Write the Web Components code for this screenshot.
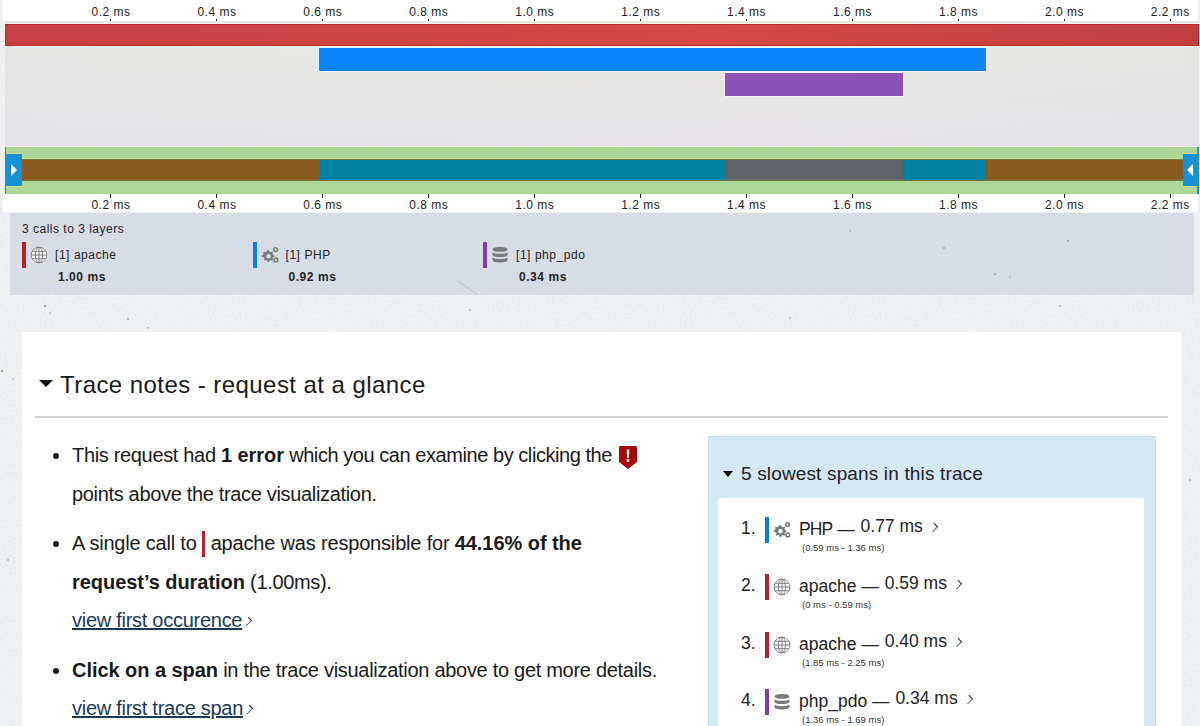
<!DOCTYPE html>
<html><head><meta charset="utf-8">
<style>
html,body{margin:0;padding:0;height:726px;overflow:hidden}
body{font-family:"Liberation Sans",Arial,sans-serif;color:#1a1a1a;
background-color:#f0f2f3;
background-image:url("data:image/svg+xml,%3Csvg xmlns='http://www.w3.org/2000/svg' width='1200' height='726'%3E%3Cfilter id='n'%3E%3CfeTurbulence type='fractalNoise' baseFrequency='.4' numOctaves='3' seed='7'/%3E%3CfeColorMatrix values='0 0 0 0 .6 0 0 0 0 .62 0 0 0 0 .63 0 0 0 .42 -.15'/%3E%3C/filter%3E%3Crect width='1200' height='726' filter='url(%23n)'/%3E%3Cg fill='%23a9adad'%3E%3Ccircle cx='45' cy='306' r='1.2'/%3E%3Ccircle cx='50' cy='313' r='.8'/%3E%3Ccircle cx='128' cy='319' r='1'/%3E%3Ccircle cx='148' cy='328' r='.9'/%3E%3Ccircle cx='2' cy='371' r='1.200'/%3E%3Ccircle cx='13' cy='379' r='.7'/%3E%3Ccircle cx='470' cy='310' r='.9'/%3E%3Ccircle cx='790' cy='318' r='.8'/%3E%3Ccircle cx='1060' cy='306' r='1'/%3E%3Ccircle cx='1190' cy='480' r='1'/%3E%3Ccircle cx='8' cy='560' r='.9'/%3E%3C/g%3E%3C/svg%3E");}
trace-app{display:block}
</style></head><body>
<trace-app></trace-app>
<script>
const def=(name,html)=>{customElements.define(name,class extends HTMLElement{
  constructor(){super();this.attachShadow({mode:'open'}).innerHTML=html;}
})};

/* icon */
customElements.define('layer-icon',class extends HTMLElement{
  connectedCallback(){
    const t=this.getAttribute('type'),s=this.getAttribute('size')||18;
    const icons={
globe:`<circle cx="9" cy="9" r="8.8" fill="#fff" opacity=".8"/><g fill="none" stroke="#808080" stroke-width="1"><circle cx="9" cy="9" r="7.9"/><ellipse cx="9" cy="9" rx="3.6" ry="7.900"/><path d="M9 1.100v15.800M1.100 9h15.800M2.300 5.300h13.400M2.300 12.700h13.400"/></g>`,
gears:`<g fill="#7a7a7a"><path fill-rule="evenodd" d="M7 4.200l1.300.2.4 1.300 1.200.5 1.200-.6 1 1-.6 1.200.5 1.200 1.300.4v1.500l-1.300.4-.5 1.200.6 1.200-1 1-1.200-.6-1.200.5-.4 1.300H6.700l-.4-1.300-1.200-.5-1.200.6-1-1 .6-1.200-.5-1.200L.7 11V9.500l1.300-.4.5-1.200-.6-1.200 1-1 1.200.6 1.200-.5.4-1.300zM7.500 8a2.300 2.300 0 100 4.600 2.300 2.300 0 000-4.600z"/></g><g fill="none" stroke="#7a7a7a" stroke-width="1.500"><circle cx="14.600" cy="3.600" r="1.900"/><circle cx="14.800" cy="14" r="1.900"/></g>`,
db:`<g fill="#7a7a7a"><path d="M1.500 3.400C1.500 1.900 4.800 1 9 1s7.500.9 7.500 2.400S13.200 5.800 9 5.800 1.500 4.900 1.500 3.400z"/><path d="M1.500 6.200c1.400 1.100 4.200 1.600 7.500 1.600s6.100-.5 7.500-1.600v2.500c0 1.400-3.300 2.400-7.500 2.400s-7.500-1-7.500-2.400z"/><path d="M1.500 11.400c1.400 1.100 4.200 1.600 7.500 1.600s6.100-.5 7.500-1.600v2.700c0 1.500-3.300 2.500-7.500 2.500s-7.500-1-7.500-2.500z"/></g>`};
    this.attachShadow({mode:'open'}).innerHTML=`<style>:host{display:inline-flex;width:${s}px;height:${s}px;flex:none}svg{width:100%;height:100%;display:block}</style><svg viewBox="0 0 18 18">${icons[t]}</svg>`;
  }
});

/* axis */
const labels=['0.2','0.4','0.6','0.8','1.0','1.2','1.4','1.6','1.8','2.0','2.2'];
def('time-axis',`<style>
:host{display:flex;box-sizing:border-box;background:#fff;height:var(--h,21px);margin:0 2px 0 3px;padding-left:55px;font-size:12px;color:#222;overflow:hidden}
.t{flex:none;width:105.940px;display:flex;flex-direction:column;align-items:center}
.l{line-height:14px;white-space:nowrap;letter-spacing:.5px;margin-top:var(--top,5px)}
.k{width:1px;height:var(--k,2px);background:#222;order:var(--ko,1)}
</style>`+labels.map(l=>`<div class="t"><span class="k"></span><span class="l">${l} ms</span></div>`).join(''));

/* chart */
def('span-bar',`<style>:host{display:block;box-sizing:border-box;height:var(--hh,23px);margin-bottom:2px;margin-left:var(--x);width:var(--w);background:var(--g,var(--c));border:1px solid var(--b,var(--c));box-shadow:0 0 0 1px rgba(255,255,255,.4)}</style>`);

def('trace-chart',`<style>
:host{display:block;box-sizing:border-box;height:125px;margin:0 1px 0 5px;padding-top:3px;background:linear-gradient(180deg,rgba(230,232,226,.6) 0,rgba(228,226,232,.8) 100%),linear-gradient(90deg,#e4e5e3 0,#ede9e4 65%,#e2e2e1 100%)}
</style><slot></slot>`);

def('trace-minimap',`<style>
:host{display:flex;box-sizing:border-box;height:47px;margin:1px 1px 0 5px;background:#aed696;padding-top:12px;position:relative;border-left:1px solid #1b8fd0;border-right:2px solid #1b8fd0}
.row{display:flex;height:22px;width:100%;border-top:1px solid #6f7a3e;border-bottom:1px solid #6f7a3e;box-sizing:border-box;margin-left:15px;margin-right:12px;box-shadow:0 -1px 0 #d4dc94}
.s{height:100%;flex:none}
.h{position:absolute;top:7px;width:16px;height:32px;background:#1890d4;display:flex;align-items:center;justify-content:center;box-shadow:0 1px 0 #d4dc94,0 -1px 0 #d4dc94}
.h.l{left:0}.h.r{right:0;width:14px}
.h i{width:0;height:0;border-style:solid;border-width:6px 0 6px 6px;border-color:transparent transparent transparent #fff}
.h.r i{border-width:6px 6px 6px 0;border-color:transparent #fff transparent transparent}
</style>
<div class="h l"><i></i></div>
<div class="row">
<div class="s" style="width:298px;background:#8a5b20"></div>
<div class="s" style="width:406px;background:#0083a3"></div>
<div class="s" style="width:178px;background:#606368"></div>
<div class="s" style="width:83px;background:#0083a3"></div>
<div class="s" style="flex:1;background:#8a5b20"></div>
</div>
<div class="h r"><i></i></div>`);

/* legend */
def('layer-legend',`<style>
:host{display:block;box-sizing:border-box;height:82px;margin:1px 6px 0 10px;background-color:#d8dde6;padding:9px 12px 0;font-size:12px;color:#222;
background-image:url("data:image/svg+xml,%3Csvg xmlns='http://www.w3.org/2000/svg' width='1184' height='82'%3E%3Cfilter id='n'%3E%3CfeTurbulence type='fractalNoise' baseFrequency='.5' numOctaves='3' seed='3'/%3E%3CfeColorMatrix values='0 0 0 0 .6 0 0 0 0 .63 0 0 0 0 .68 0 0 0 .5 -.18'/%3E%3C/filter%3E%3Crect width='1184' height='82' filter='url(%23n)'/%3E%3Cg fill='%23a0a4ac'%3E%3Ccircle cx='1058' cy='28' r='1'/%3E%3Ccircle cx='934' cy='35' r='1'/%3E%3Ccircle cx='985' cy='61' r='1'/%3E%3Ccircle cx='1000' cy='64' r='.8'/%3E%3Ccircle cx='840' cy='18' r='.8'/%3E%3C/g%3E%3Cpath d='M448 68l20 14' stroke='%23b4b8c0' stroke-width='.8'/%3E%3C/svg%3E")}
.h{line-height:14px;letter-spacing:.5px}
.r{display:flex;margin-top:6px}
</style><div class="h">3 calls to 3 layers</div><div class="r"><slot></slot></div>`);

customElements.define('legend-item',class extends HTMLElement{connectedCallback(){
 const g=n=>this.getAttribute(n);
 this.attachShadow({mode:'open'}).innerHTML=`<style>
:host{display:grid;grid-template-columns:4px auto 1fr;width:230.500px;font-size:12px;letter-spacing:.55px}
.b{width:4px;height:26px;background:${g('color')}}
layer-icon{margin:4px 0 0 4px}
.n{margin:0 0 0 7px;line-height:26px}
.t{grid-column:1/-1;font-weight:700;padding-left:36px;line-height:14px;margin-top:2px}
</style><span class="b"></span><layer-icon type="${g('icon')}" size="18"></layer-icon><span class="n">[1] ${g('name')}</span><span class="t">${g('time')}</span>`;
}});

/* slow spans */
customElements.define('span-row',class extends HTMLElement{connectedCallback(){
 const g=n=>this.getAttribute(n);
 this.attachShadow({mode:'open'}).innerHTML=`<style>
:host{display:grid;grid-template-columns:24px 4px 22px auto;height:57.300px;align-content:start;font-size:18px;color:#222}
.num{line-height:20px;font-size:17.500px;margin-top:1px}
.b{width:4px;height:26px;background:${g('color')}}
layer-icon{margin:4px 0 0 4px}
.m{padding-left:8px;white-space:nowrap;line-height:22px;font-size:17.500px;margin-top:-2px}
.m b{font-weight:400;position:relative;top:3px;margin-right:1px}
.m b span{letter-spacing:${g('ls')||0}px}
.c{display:inline-block;margin-left:2px;position:relative;top:-1px;width:6px;height:6px;border:solid #333;border-width:1.500px 1.500px 0 0;transform:rotate(45deg) scale(.8,1.100)}
.r{grid-column:4;grid-row:2;font-size:9.500px;line-height:10px;padding-left:11px;color:#333}
</style><span class="num">${g('n')}.</span><span class="b"></span><layer-icon type="${g('icon')}" size="18"></layer-icon><span class="m"><b><span>${g('name')}</span> —</b> ${g('time')} ms <i class="c"></i></span><span class="r">(${g('range')})</span>`;
}});

def('slow-spans',`<style>
:host{display:flex;flex-direction:column;box-sizing:border-box;width:448px;height:320px;background:#d4e9f4;border:1px solid #c4e0ef;border-bottom:0;padding:0 11px 0 9px;flex:none}
.h{display:flex;align-items:center;flex:none;height:61px;padding:13px 0 0 5px;box-sizing:border-box;font-size:19px;color:#222;letter-spacing:.15px;white-space:nowrap}
.a{width:0;height:0;border-style:solid;border-width:6px 5.500px 0;border-color:#111 transparent transparent;margin-right:8px}
.b{background:#fff;flex:1;padding:19px 0 0 23px}
</style><div class="h"><span class="a"></span>5 slowest spans in this trace</div><div class="b"><slot></slot></div>`);

def('note-link',`<style>:host{display:block;letter-spacing:-.27px}a{color:#1a3a5a;text-decoration:underline}.c{display:inline-block;margin-left:2px;position:relative;top:-2px;width:6px;height:6px;border:solid #333;border-width:1.500px 1.500px 0 0;transform:rotate(45deg) scale(.7,1.200)}</style><a><slot></slot></a><i class="c"></i>`);

def('trace-notes',`<style>
:host{display:block;box-sizing:border-box;margin:37px 19px 0 22px;height:400px;background:#fff;padding:0 13px}
.h{display:flex;align-items:center;height:86px;box-sizing:border-box;border-bottom:2px solid #cfcfcf;font-size:24px;color:#1a1a1a;padding:22px 0 0 4px;letter-spacing:.44px;white-space:nowrap}
.a{width:0;height:0;border-style:solid;border-width:7px 7px 0;border-color:#111 transparent transparent;margin:-4px 7px 0 0}
.body{display:flex;padding-top:18px;justify-content:space-between;padding-right:12px}
.l{flex:1}
</style><div class="h"><span class="a"></span>Trace notes - request at a glance</div>
<div class="body"><div class="l"><slot name="notes"></slot></div><slot name="side"></slot></div>`);

def('note-list',`<style>
:host{display:block;font-size:20px;line-height:38.500px;color:#1a1a1a;letter-spacing:-.33px}
ul{margin:0;padding:0 0 0 37px}
</style><ul><slot></slot></ul>`);

def('trace-app',`<style>:host{display:block}
.ind{display:inline-block;width:3px;height:26px;background:#b5232a;vertical-align:-7px;margin:0 6px 0 5px}
.err{display:inline-block;vertical-align:-7px;margin-left:7px}
b{font-weight:700;letter-spacing:-.05px}
li{margin-bottom:11px;white-space:nowrap}
</style>
<time-axis></time-axis>
<trace-chart>
<span-bar style="--hh:22px;--x:0;--w:1194px;--c:#cc4444;--b:#bf2a2a;--g:linear-gradient(90deg,#c64044 0,#d54a44 60%,#c03e42 100%)"></span-bar>
<span-bar style="--x:314px;--w:667px;--c:#0a84ff"></span-bar>
<span-bar style="--x:720px;--w:178px;--c:#8c52b8"></span-bar>
</trace-chart>
<trace-minimap></trace-minimap>
<time-axis style="--h:18px;--top:0px;--k:4px;--ko:-1"></time-axis>
<layer-legend>
<legend-item color="#b5232a" icon="globe" name="apache" time="1.00 ms"></legend-item>
<legend-item color="#0a7cf0" icon="gears" name="PHP" time="0.92 ms"></legend-item>
<legend-item color="#7d3fb0" icon="db" name="php_pdo" time="0.34 ms"></legend-item>
</layer-legend>
<trace-notes>
<note-list slot="notes">
<li>This request had <b>1 error</b> <span style="letter-spacing:-.44px">which you can examine by clicking the</span><svg class="err" width="18" height="23" viewBox="0 0 18 23"><path d="M1 0h16l1 1v15l-9 7-9-7V1z" fill="#a80808"/><path d="M7.600 3.500h2.800l-.5 8.500H8.100z" fill="#fff"/><rect x="7.700" y="13.300" width="2.600" height="2.600" fill="#fff"/></svg><br>points above the trace visualization.</li>
<li><span style="letter-spacing:-.2px">A single call to</span><span class="ind"></span><span style="letter-spacing:-.18px">apache was responsible for</span> <b>44.16% of the<br>request’s duration</b> (1.00ms).<note-link>view first occurence</note-link></li>
<li><b>Click on a span</b> <span style="letter-spacing:-.29px">in the trace visualization above to get more details.</span><note-link>view first trace span</note-link></li>
</note-list>
<slow-spans slot="side">
<span-row n="1" color="#0a7cf0" icon="gears" name="PHP" ls="-.9" time="0.77" range="0.59 ms - 1.36 ms"></span-row>
<span-row n="2" color="#b5232a" icon="globe" name="apache" time="0.59" range="0 ms - 0.59 ms"></span-row>
<span-row n="3" color="#b5232a" icon="globe" name="apache" time="0.40" range="1.85 ms - 2.25 ms"></span-row>
<span-row n="4" color="#7d3fb0" icon="db" name="php_pdo" time="0.34" range="1.36 ms - 1.69 ms"></span-row>
</slow-spans>
</trace-notes>`);
</script>
</body></html>
